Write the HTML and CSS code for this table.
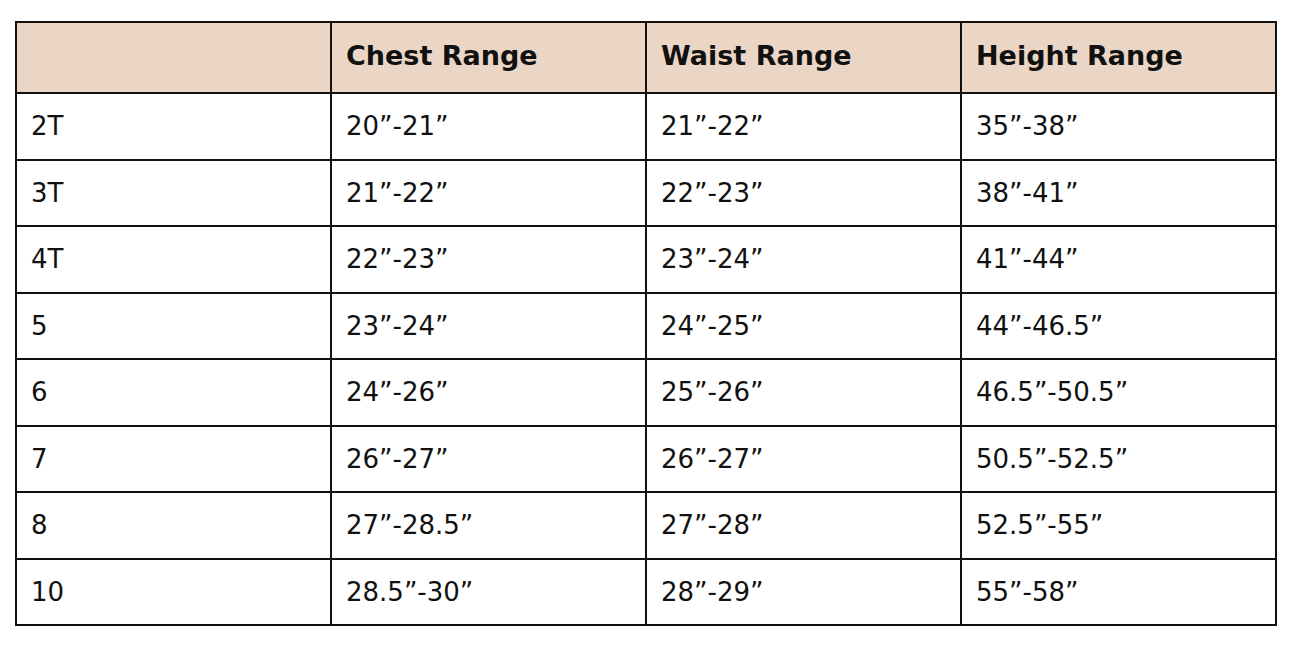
FILE: index.html
```html
<!DOCTYPE html>
<html lang="en">
<head>
<meta charset="utf-8">
<title>Size Chart</title>
<link rel="stylesheet" href="styles.css">
</head>
<body>
<table class="size-table">
  <thead>
    <tr><th></th><th>Chest Range</th><th>Waist Range</th><th>Height Range</th></tr>
  </thead>
  <tbody>
    <tr><td>2T</td><td>20”-21”</td><td>21”-22”</td><td>35”-38”</td></tr>
    <tr><td>3T</td><td>21”-22”</td><td>22”-23”</td><td>38”-41”</td></tr>
    <tr><td>4T</td><td>22”-23”</td><td>23”-24”</td><td>41”-44”</td></tr>
    <tr><td>5</td><td>23”-24”</td><td>24”-25”</td><td>44”-46.5”</td></tr>
    <tr><td>6</td><td>24”-26”</td><td>25”-26”</td><td>46.5”-50.5”</td></tr>
    <tr><td>7</td><td>26”-27”</td><td>26”-27”</td><td>50.5”-52.5”</td></tr>
    <tr><td>8</td><td>27”-28.5”</td><td>27”-28”</td><td>52.5”-55”</td></tr>
    <tr><td>10</td><td>28.5”-30”</td><td>28”-29”</td><td>55”-58”</td></tr>
  </tbody>
</table>
</body>
</html>
```
FILE: styles.css
```css
html, body {
  margin: 0;
  padding: 0;
  background: #ffffff;
}
body {
  padding: 21px 0 0 15px;
  font-family: "DejaVu Sans", "Liberation Sans", sans-serif;
  color: #111111;
}
.size-table {
  border-collapse: collapse;
  width: 1262px;
  table-layout: fixed;
}
.size-table th,
.size-table td {
  border: 2px solid #111111;
  padding: 0 0 0 14px;
  text-align: left;
  vertical-align: middle;
  white-space: nowrap;
}
.size-table th {
  background: #ebd6c6;
  font-weight: bold;
  font-size: 27px;
  height: 65px;
  padding-bottom: 4px;
}
.size-table td {
  font-size: 26px;
  font-weight: normal;
  height: 64.5px;
}
```
